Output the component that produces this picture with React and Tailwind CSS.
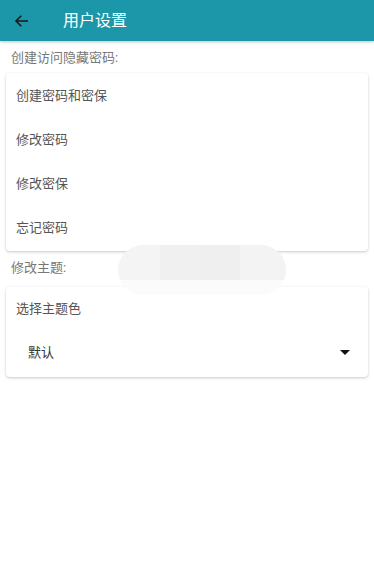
import React from "react";

export default function App() {
  const font = { fontFamily: '"Roboto", "Noto Sans CJK SC", sans-serif' };
  return (
    <div className="relative w-[374px] h-[567px] bg-white overflow-hidden" style={font}>
      <div className="h-[41px] bg-[#1b97a9] flex items-center shadow-[0_1px_3px_rgba(0,0,0,0.25)] relative z-10">
        <svg className="ml-[13px]" width="18" height="18" viewBox="0 0 24 24" fill="none" stroke="#1a1a1a" strokeWidth="2.2">
          <path d="M20 12H5M11 5l-7 7 7 7" />
        </svg>
        <span className="ml-[32px] text-[16px] text-white">用户设置</span>
      </div>
      <div className="px-[6px]">
        <div className="pl-[5px] pt-[5px] h-[32px] text-[13px] text-[#777] leading-[24px]">创建访问隐藏密码:</div>
        <div className="rounded-[4px] bg-white shadow-[0_1px_3px_rgba(0,0,0,0.22)] pt-[1px] pb-[1px]">
          {["创建密码和密保", "修改密码", "修改密保", "忘记密码"].map((t) => (
            <div key={t} className="h-[44px] flex items-center pl-[10px] text-[13px] text-[#555]">{t}</div>
          ))}
        </div>
        <div className="pl-[5px] pt-[5px] h-[36px] text-[13px] text-[#777] leading-[24px]">修改主题:</div>
        <div className="rounded-[4px] bg-white shadow-[0_1px_3px_rgba(0,0,0,0.22)] h-[90px]">
          <div className="h-[43px] flex items-center pl-[10px] text-[13px] text-[#555]">选择主题色</div>
          <div className="h-[45px] flex items-center pl-[22px] pr-[18px] justify-between text-[13px] text-[#333]">
            <span>默认</span>
            <svg width="10" height="6" viewBox="0 0 10 6"><path d="M0 0h10L5 5z" fill="#111" /></svg>
          </div>
        </div>
      </div>
      <div className="absolute left-[118px] top-[245px] w-[168px] h-[50px] rounded-[25px] overflow-hidden flex flex-col">
        <div className="flex h-[35px]">
          <div className="w-[42px] bg-[#f4f4f4]" />
          <div className="w-[40px] bg-[#f0f0f0]" />
          <div className="w-[40px] bg-[#efefef]" />
          <div className="flex-1 bg-[#f3f3f3]" />
        </div>
        <div className="flex-1 bg-[#fbfbfb]" />
      </div>
    </div>
  );
}
